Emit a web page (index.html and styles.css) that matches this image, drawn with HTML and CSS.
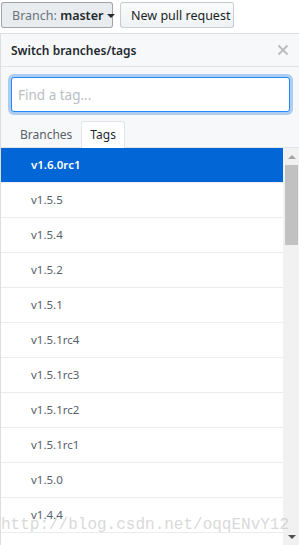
FILE: index.html
```html
<!DOCTYPE html>
<html>
<head>
    <title>Switch branches/tags</title>
    <link rel="stylesheet" href="styles.css">
</head>
<body>
    <div class="toolbar">
        <button class="btn btn-selected"><span class="btn-label">Branch:</span> <span class="btn-branch">master</span><span class="caret"></span></button>
        <button class="btn">New pull request</button>
    </div>

    <div class="select-menu">
        <div class="menu-header">
            <span class="menu-title">Switch branches/tags</span>
            <svg class="menu-close" width="12" height="12" viewBox="0 0 12 12">
                <path d="M1.5 1.5 L10.5 10.5 M10.5 1.5 L1.5 10.5" stroke="#bbb" stroke-width="1.8" fill="none"/>
            </svg>
        </div>
        <div class="menu-filters">
            <div class="filter-box">
                <input type="text" class="filter-input" placeholder="Find a tag...">
            </div>
            <div class="menu-tabs">
                <span class="menu-tab">Branches</span>
                <span class="menu-tab selected">Tags</span>
            </div>
        </div>
        <div class="menu-body">
            <ul class="menu-list">
                <li class="menu-item active">v1.6.0rc1</li>
                <li class="menu-item">v1.5.5</li>
                <li class="menu-item">v1.5.4</li>
                <li class="menu-item">v1.5.2</li>
                <li class="menu-item">v1.5.1</li>
                <li class="menu-item">v1.5.1rc4</li>
                <li class="menu-item">v1.5.1rc3</li>
                <li class="menu-item">v1.5.1rc2</li>
                <li class="menu-item">v1.5.1rc1</li>
                <li class="menu-item">v1.5.0</li>
                <li class="menu-item">v1.4.4</li>
            </ul>
            <div class="scrollbar">
                <span class="arrow-up"></span>
                <div class="thumb"></div>
                <div class="track"></div>
                <span class="arrow-down"></span>
            </div>
        </div>
    </div>

    <div class="watermark">http://blog.csdn.net/oqqENvY12</div>
</body>
</html>
```

FILE: styles.css
```css
html, body {
    margin: 0;
    height: 545px;
    overflow: hidden;
}
body {
    font-family: "Noto Sans", "Open Sans", sans-serif;
    color: #24292e;
    background-color: #fff;
    position: relative;
}

.toolbar {
    display: flex;
    gap: 7px;
    padding: 2px 0 0 1px;
    height: 31px;
    box-sizing: border-box;
}
.btn {
    font-family: inherit;
    font-size: 12.5px;
    font-weight: 400;
    color: #1b1f23;
    height: 26px;
    padding: 0 10px;
    border: 1px solid rgba(27, 31, 35, 0.2);
    border-radius: 3px;
    background-image: linear-gradient(-180deg, #fafbfc 0%, #eff3f6 90%);
    white-space: nowrap;
    width: 114px;
}
.btn-selected {
    background-image: none;
    background-color: #e9ecef;
    border-color: rgba(27, 31, 35, 0.35);
    width: 112px;
    text-align: left;
}
.btn-label { color: #6a737d; }
.btn-branch { color: #24292e; font-weight: 600; }
.caret {
    display: inline-block;
    vertical-align: middle;
    margin-left: 4px;
    border-top: 4px solid #24292e;
    border-left: 4px solid transparent;
    border-right: 4px solid transparent;
}

.select-menu {
    margin-top: 2px;
    width: 302px;
    border: 1px solid rgba(27, 31, 35, 0.15);
    border-right: none;
    border-bottom: none;
    background: #fff;
}
.menu-header {
    display: flex;
    align-items: center;
    justify-content: space-between;
    padding: 0 10px;
    background: #f6f8fa;
    border-bottom: 1px solid #e1e4e8;
    box-sizing: border-box;
    height: 33px;
    width: 299px;
}
.menu-title {
    font-size: 12px;
    font-weight: 600;
    color: #24292e;
}
.menu-close { margin-right: 1px; }

.menu-filters {
    background: #f6f8fa;
    width: 299px;
}
.filter-box {
    padding: 10px 9px 0 10px;
}
.filter-input {
    display: block;
    box-sizing: border-box;
    width: 279px;
    height: 35px;
    margin: 0;
    padding: 0 6px;
    font-family: inherit;
    font-size: 13.5px;
    color: #24292e;
    background: #fff;
    border: 1px solid #2188ff;
    border-radius: 3px;
    box-shadow: 0 0 0 3px rgba(3, 102, 214, 0.3);
    outline: none;
}
.filter-input::placeholder { color: #b9bec4; }

.menu-tabs {
    display: flex;
    align-items: flex-end;
    padding: 11px 0 0 10px;
    height: 36px;
    box-sizing: border-box;
    border-bottom: 1px solid #e1e4e8;
}
.menu-tab {
    font-size: 12px;
    color: #586069;
    padding: 0 8px;
    height: 25px;
    line-height: 26px;
    border: 1px solid transparent;
    border-bottom: none;
    border-radius: 3px 3px 0 0;
}
.menu-tab.selected {
    color: #24292e;
    background: #fff;
    border-color: #e1e4e8;
    margin-bottom: -1px;
    height: 26px;
}

.menu-body {
    display: flex;
    width: 299px;
}
.menu-list {
    list-style: none;
    margin: 0;
    padding: 0;
    flex: 1;
}
.menu-item {
    height: 35px;
    line-height: 34px;
    padding-left: 30px;
    font-size: 11.5px;
    color: #586069;
    border-bottom: 1px solid #eaecef;
    box-sizing: border-box;
}
.menu-item.active {
    background: #0366d6;
    color: #fff;
    font-weight: 600;
}

.scrollbar {
    width: 17px;
    height: 398px;
    background: #f1f1f1;
    display: flex;
    flex-direction: column;
    align-items: center;
}
.arrow-up, .arrow-down {
    display: block;
    border-left: 4px solid transparent;
    border-right: 4px solid transparent;
}
.arrow-up {
    margin: 7px 0 6px;
    border-bottom: 4px solid #a3a3a3;
}
.arrow-down {
    margin: 6px 0 7px;
    border-top: 4px solid #505050;
}
.thumb {
    width: 13px;
    height: 80px;
    background: #c1c1c1;
}
.track { flex: 1; }

.watermark {
    position: absolute;
    left: 1px;
    top: 516px;
    font-family: "Liberation Mono", monospace;
    font-size: 16px;
    color: rgba(200, 200, 200, 0.7);
}
```
